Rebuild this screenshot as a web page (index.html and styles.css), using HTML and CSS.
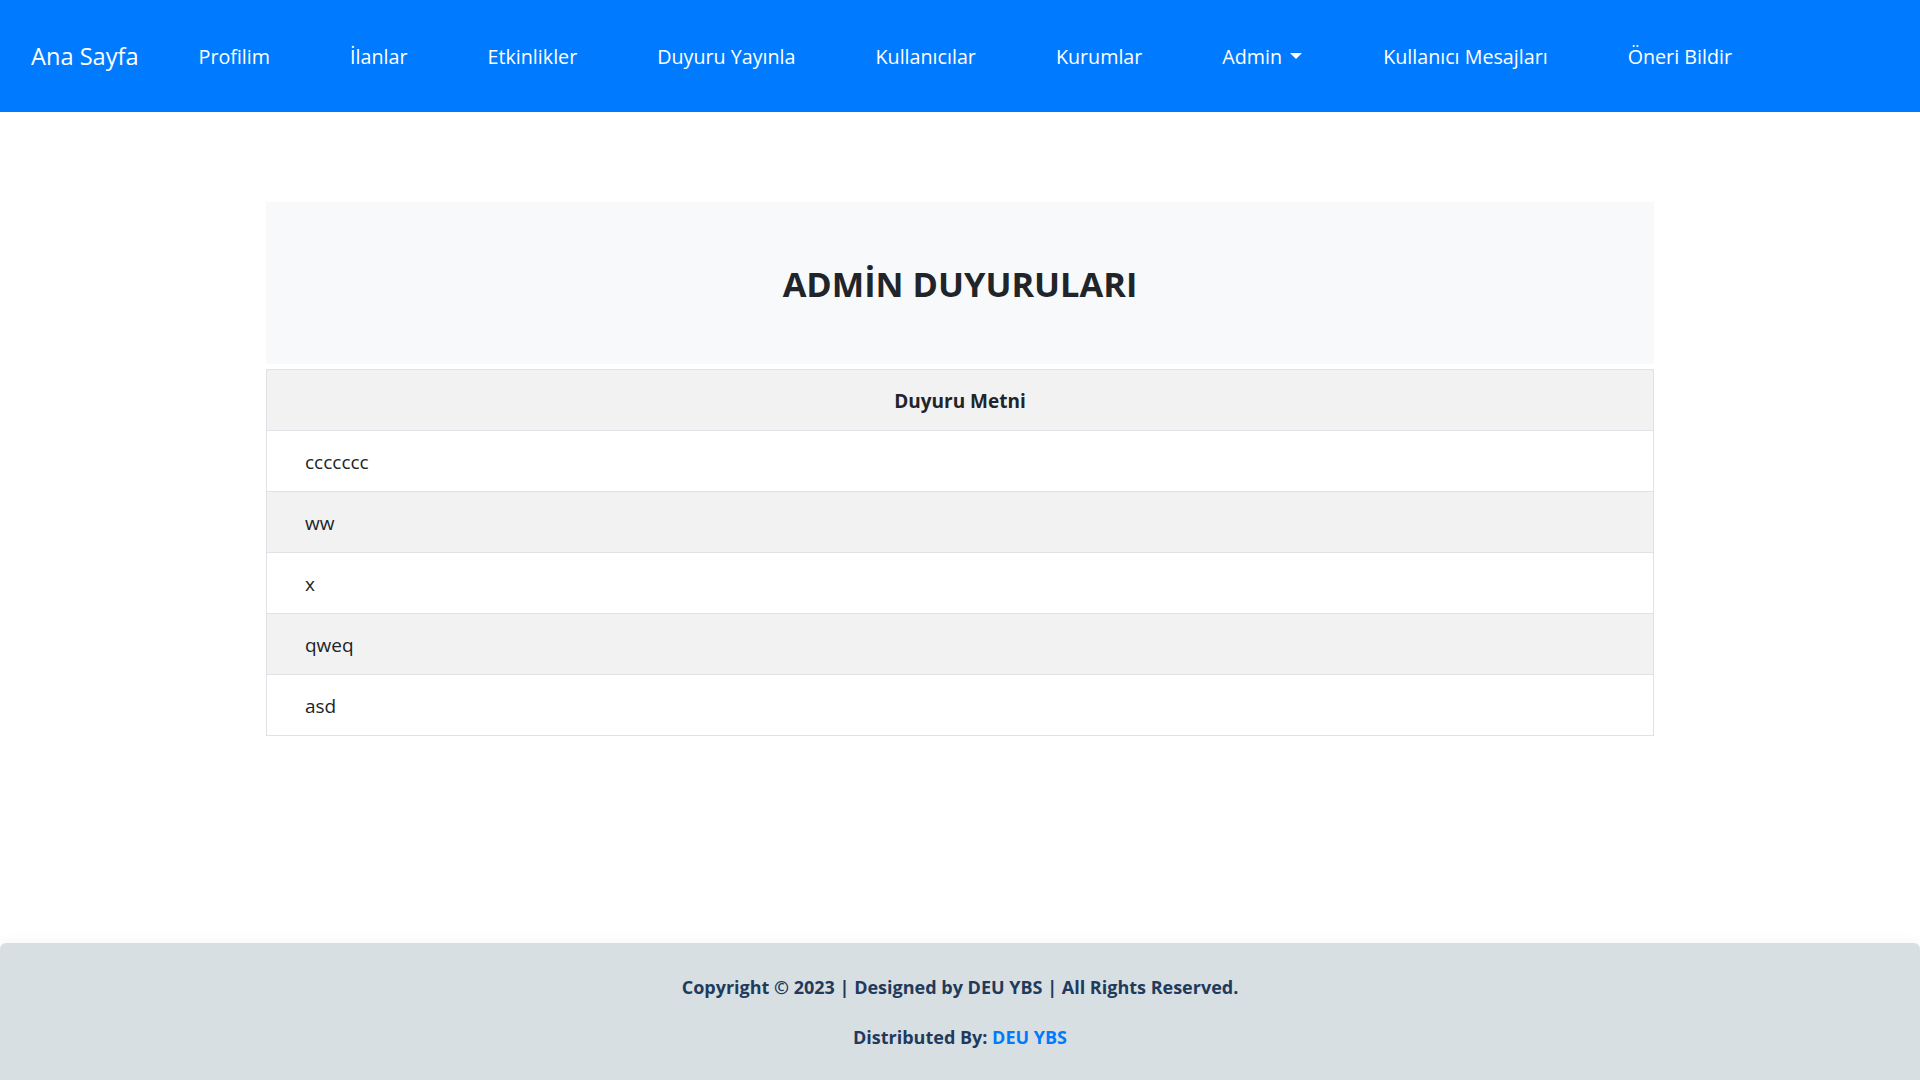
FILE: index.html
```html
<!DOCTYPE html>
<html lang="tr">
<head>
<meta charset="utf-8">
<title>Admin Duyuruları</title>
<link rel="stylesheet" href="styles.css">
</head>
<body>
<nav class="navbar">
  <a class="brand" href="#">Ana Sayfa</a>
  <a class="nav-link" href="#">Profilim</a>
  <a class="nav-link" href="#">İlanlar</a>
  <a class="nav-link" href="#">Etkinlikler</a>
  <a class="nav-link" href="#">Duyuru Yayınla</a>
  <a class="nav-link" href="#">Kullanıcılar</a>
  <a class="nav-link" href="#">Kurumlar</a>
  <a class="nav-link dropdown" href="#">Admin<span class="caret"></span></a>
  <a class="nav-link" href="#">Kullanıcı Mesajları</a>
  <a class="nav-link" href="#">Öneri Bildir</a>
</nav>
<main class="main">
  <div class="panel">
    <div class="panel-head"><h1 class="title">ADMİN DUYURULARI</h1></div>
    <table class="table">
      <thead><tr><th>Duyuru Metni</th></tr></thead>
      <tbody>
        <tr><td>ccccccc</td></tr>
        <tr class="alt"><td>ww</td></tr>
        <tr><td>x</td></tr>
        <tr class="alt"><td>qweq</td></tr>
        <tr><td>asd</td></tr>
      </tbody>
    </table>
  </div>
</main>
<footer class="footer">
  <p>Copyright © 2023 | Designed by DEU YBS | All Rights Reserved.</p>
  <p>Distributed By: <a href="#" class="footer-link">DEU YBS</a></p>
</footer>
</body>
</html>
```
FILE: styles.css
```css
* { box-sizing: border-box; }
html, body { margin: 0; padding: 0; }
body {
  font-family: "Open Sans", "Noto Sans", "DejaVu Sans", sans-serif;
  color: #212529;
  background: #fff;
  min-height: 100vh;
  display: flex;
  flex-direction: column;
}
a { text-decoration: none; }

.navbar {
  height: 112px;
  background: #007bff;
  display: flex;
  align-items: center;
  padding-left: 31px;
}
.brand {
  color: #fff;
  font-size: 23.6px;
  margin-right: 20px;
  white-space: nowrap;
}
.nav-link {
  color: #fff;
  font-size: 19.7px;
  padding: 0 40px;
  white-space: nowrap;
  display: flex;
  align-items: center;
}
.nav-link.dropdown { padding-right: 41px; }
.caret {
  display: inline-block;
  width: 0;
  height: 0;
  margin-left: 8px;
  border-left: 6px solid transparent;
  border-right: 6px solid transparent;
  border-top: 6px solid #fff;
}

.main {
  padding-top: 90px;
}
.panel {
  width: 1388px;
  margin: 0 auto;
}
.panel-head {
  background: #f8f9fa;
  height: 162px;
  display: flex;
  align-items: center;
  justify-content: center;
  margin-bottom: 5px;
}
.title {
  margin: 0;
  font-size: 34.4px;
  font-weight: 700;
  color: #212529;
}
.table {
  width: 100%;
  border-collapse: collapse;
  border: 1px solid #dee2e6;
  font-size: 19px;
}
.table th {
  background: #f2f2f2;
  height: 61px;
  font-weight: 700;
  text-align: center;
  border-bottom: 1px solid #dee2e6;
  padding: 1px 0 0;
}
.table td {
  height: 61px;
  padding: 1px 0 0 38px;
  border-top: 1px solid #dee2e6;
}
.table tr.alt td { background: #f2f2f2; }

.footer {
  margin-top: auto;
  height: 137px;
  background: #d8dfe2;
  border-radius: 6px 6px 0 0;
  box-shadow: 0 -4px 12px rgba(0, 0, 0, 0.03);
  padding: 32px 0 0;
  text-align: center;
  color: #1f3a5c;
  font-weight: 700;
  font-size: 18px;
}
.footer p {
  margin: 0 0 26px;
  line-height: 24px;
}
.footer-link { color: #007bff; }
```
